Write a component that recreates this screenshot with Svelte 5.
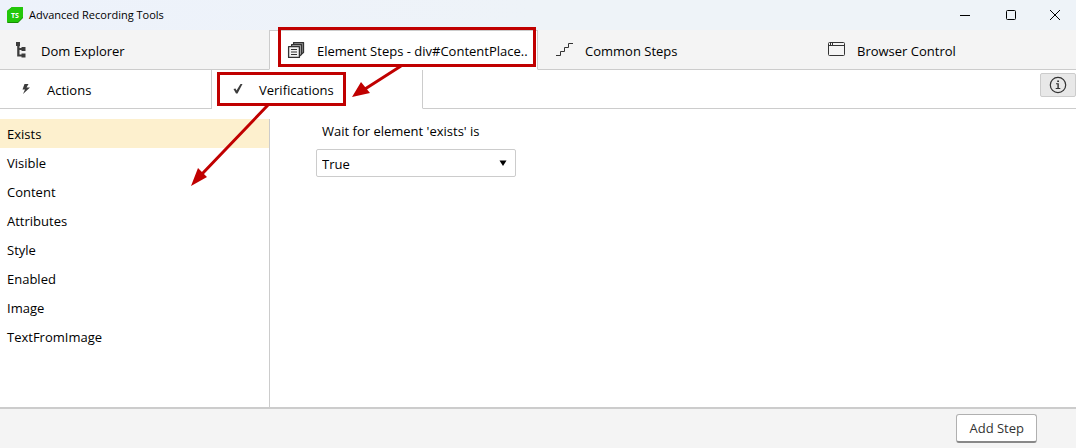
<script lang="ts">
  type Icon = 'tree' | 'stack' | 'stairs' | 'browser';

  const tools: { label: string; icon: Icon; width: number }[] = [
    { label: 'Dom Explorer', icon: 'tree', width: 13 },
    { label: 'Element Steps - div#ContentPlace..', icon: 'stack', width: 19 },
    { label: 'Common Steps', icon: 'stairs', width: 19 },
    { label: 'Browser Control', icon: 'browser', width: 22 },
  ];

  const modes = ['Actions', 'Verifications'];

  const verifications = [
    'Exists',
    'Visible',
    'Content',
    'Attributes',
    'Style',
    'Enabled',
    'Image',
    'TextFromImage',
  ];

  let activeTool = $state(1);
  let activeMode = $state(1);
  let selected = $state('Exists');
  let expected = $state('True');
</script>

<div class="window">
  <header class="titlebar">
    <svg class="logo" width="16" height="16" viewBox="0 0 16 16" aria-hidden="true">
      <path d="M5 0H15Q16 0 16 1V11L11 16H1Q0 16 0 15V4Z" fill="#168c05" />
      <path d="M5 0H15Q16 0 16 1V10L11 15H0V4Z" fill="#22c70a" />
      <text x="8" y="11" text-anchor="middle" font-size="7" font-weight="700" fill="#fff">TS</text>
    </svg>
    <span class="title">Advanced Recording Tools</span>
    <div class="window-controls">
      <button aria-label="Minimize">
        <svg width="12" height="12" viewBox="0 0 12 12"><path d="M1 6.500H11" /></svg>
      </button>
      <button aria-label="Maximize">
        <svg width="12" height="12" viewBox="0 0 12 12"><rect x="1.500" y="1.500" width="9" height="9" rx="1" /></svg>
      </button>
      <button aria-label="Close">
        <svg width="12" height="12" viewBox="0 0 12 12"><path d="M1 1L11 11M11 1L1 11" /></svg>
      </button>
    </div>
  </header>

  <div class="tools" role="tablist" aria-label="Tools">
    {#each tools as tool, i}
      <button
        class="tool"
        class:active={activeTool === i}
        role="tab"
        aria-selected={activeTool === i}
        onclick={() => (activeTool = i)}
      >
        <svg width={tool.width} height="18" viewBox="0 0 {tool.width} 18" aria-hidden="true">
          {#if tool.icon === 'tree'}
            <path d="M0 0H4V4H3.500V6H5.500V5H9.500V9H5.500V8H3.500V12.500H5.500V11.500H9.500V15.500H5.500V14.500H1.200V4H0Z" fill="#3c3c3c" />
          {:else if tool.icon === 'stack'}
            <g stroke="#333" stroke-width="1.300" stroke-linejoin="round">
              <path d="M7.600 .6H17.500V10.500L15.500 12H7.600Z" fill="#999" />
              <path d="M5.600 2.600H15.500V12.500L13.500 14H5.600Z" fill="#bbb" />
              <path d="M2.600 4.600H13.400V15.400H2.600Z" fill="#f4f4f4" />
            </g>
            <path d="M5 7.500H11M5 10H11M5 12.500H11" stroke="#333" />
          {:else if tool.icon === 'stairs'}
            <path d="M2 13.500H6.500V9.500H10.500V5.500H14.500V1.500H19" fill="none" stroke="#333" />
          {:else}
            <g fill="none" stroke="#333">
              <rect x="5.500" y=".5" width="16" height="13" rx="1" />
              <path d="M5 3.500H22M7.500 1V3M9.500 1V3" />
            </g>
          {/if}
        </svg>
        <span>{tool.label}</span>
      </button>
    {/each}
  </div>

  <div class="modes">
    <div class="mode-list" role="tablist" aria-label="Step type">
      {#each modes as mode, i}
        <button
          class="mode"
          class:active={activeMode === i}
          role="tab"
          aria-selected={activeMode === i}
          onclick={() => (activeMode = i)}
        >
          <svg width="12" height="14" viewBox="0 0 12 14" aria-hidden="true">
            {#if mode === 'Actions'}
              <path d="M4.500 1H8.500L6.500 4.500H10L3 11L5 6.500H2.500Z" fill="#3c3c3c" />
            {:else}
              <path d="M1.500 6L3.500 5.500L4.500 7.500L8.500 1H10.500L5.500 10.500H4Z" fill="#3c3c3c" />
            {/if}
          </svg>
          <span>{mode}</span>
        </button>
      {/each}
    </div>
    <div class="mode-tail">
      <button class="info" aria-label="Information">
        <svg width="18" height="18" viewBox="0 0 18 18">
          <circle cx="9" cy="9" r="7.700" fill="none" stroke="#333" stroke-width="1.200" />
          <path d="M8.200 4.500H10V6H8.200ZM7 7.300H9.800V12H11.300V13H6.700V12H8.400V8.300H7Z" fill="#333" />
        </svg>
      </button>
    </div>
  </div>

  <main class="content">
    <ul class="verifications">
      {#each verifications as name}
        <li>
          <button class:selected={selected === name} onclick={() => (selected = name)}>{name}</button>
        </li>
      {/each}
    </ul>

    <div class="form">
      <label for="expected">Wait for element 'exists' is</label>
      <div class="dropdown">
        <select id="expected" bind:value={expected}>
          <option>True</option>
          <option>False</option>
        </select>
        <svg width="8" height="6" viewBox="0 0 8 6" aria-hidden="true"><path d="M.5 .5H7.500L4 6Z" /></svg>
      </div>
    </div>
  </main>

  <footer>
    <button class="add-step">Add Step</button>
  </footer>

  <!-- callouts drawn over the window -->
  <svg class="callouts" width="540" height="190" viewBox="0 0 540 190" aria-hidden="true">
    <g fill="none" stroke="#c00000" stroke-width="3">
      <rect x="279.500" y="28.500" width="255" height="37" />
      <rect x="218.500" y="73.500" width="126" height="31" />
      <path d="M401 66L365 89M268 105L202 174" />
    </g>
    <path d="M352 97L361 82L370 93ZM191 186L198 168L207 177Z" fill="#c00000" />
  </svg>
</div>

<style>
  :global(body) {
    margin: 0;
  }

  .window {
    position: relative;
    display: flex;
    flex-direction: column;
    min-height: 100vh;
    background: #fff;
    color: #000;
    font-family: 'Segoe UI', 'Open Sans', 'Noto Sans', sans-serif;
    font-size: 13px;
    line-height: 20px;
  }

  button {
    margin: 0;
    padding: 0;
    border: 0;
    background: none;
    color: inherit;
    font: inherit;
    text-align: left;
  }

  svg {
    flex: none;
  }

  .titlebar {
    display: flex;
    align-items: center;
    height: 30px;
    padding-left: 7px;
    background: linear-gradient(90deg, #edf2fb, #eef3f8 50%);
  }

  .logo {
    margin-right: 6px;
  }

  .title {
    flex: 1;
    font-size: 11px;
  }

  .window-controls {
    display: flex;
  }

  .window-controls button {
    display: flex;
    align-items: center;
    justify-content: center;
    width: 46px;
    height: 28px;
  }

  .window-controls button:last-child {
    width: 42px;
  }

  .window-controls svg {
    fill: none;
    stroke: #000;
  }

  .tools {
    display: grid;
    grid-template-columns: repeat(4, 1fr);
    background: #f4f4f4;
  }

  .tool {
    display: flex;
    align-items: center;
    gap: 12px;
    height: 40px;
    min-width: 0;
    padding: 2px 0 0 16px;
    border-bottom: 1px solid #ccc;
    white-space: nowrap;
  }

  .tool.active {
    border: 1px solid #ccc;
    border-bottom-color: #fff;
    background: #fff;
  }

  .modes {
    display: flex;
    height: 39px;
  }

  .mode-list {
    display: flex;
  }

  .mode {
    display: flex;
    align-items: center;
    gap: 15px;
    box-sizing: border-box;
    width: 211px;
    padding: 2px 0 0 20px;
    border-right: 1px solid #ccc;
    border-bottom: 1px solid #ccc;
  }

  .mode:first-child {
    width: 212px;
  }

  .mode.active {
    border-bottom-color: #fff;
  }

  .mode-tail {
    display: flex;
    flex: 1;
    justify-content: flex-end;
    align-items: flex-start;
    padding-top: 3px;
    border-bottom: 1px solid #ccc;
  }

  .info {
    display: flex;
    align-items: center;
    justify-content: center;
    box-sizing: border-box;
    width: 36px;
    height: 24px;
    border: 1px solid #ccc;
    border-radius: 2px;
    background: #e8e8e8;
  }

  .content {
    display: flex;
    flex: 1;
    padding-top: 10px;
  }

  .verifications {
    box-sizing: border-box;
    width: 270px;
    margin: 0;
    padding: 0;
    border-right: 1px solid #ccc;
    list-style: none;
  }

  .verifications button {
    display: block;
    width: 100%;
    height: 29px;
    padding: 0 7px;
  }

  .verifications button.selected {
    background: #fdf0ce;
  }

  .form {
    padding: 2px 46px;
  }

  .form label {
    display: block;
    padding-left: 6px;
  }

  .dropdown {
    position: relative;
    width: 200px;
    margin-top: 8px;
  }

  .dropdown select {
    display: block;
    width: 100%;
    height: 28px;
    padding: 1px 5px 0;
    border: 1px solid #ccc;
    border-radius: 2px;
    background: #fff;
    color: inherit;
    font: inherit;
    appearance: none;
  }

  .dropdown svg {
    position: absolute;
    top: 11px;
    right: 9px;
    pointer-events: none;
  }

  footer {
    display: flex;
    justify-content: flex-end;
    align-items: center;
    box-sizing: border-box;
    height: 41px;
    padding-right: 39px;
    border-top: 2px solid #ccc;
    background: #f4f4f4;
  }

  .add-step {
    height: 29px;
    padding: 0 12px;
    border: 1px solid #b0b0b0;
    border-bottom: 2px solid #888;
    border-radius: 3px;
    background: #fff;
    color: #333;
  }

  .callouts {
    position: absolute;
    top: 0;
    left: 0;
    pointer-events: none;
  }
</style>
